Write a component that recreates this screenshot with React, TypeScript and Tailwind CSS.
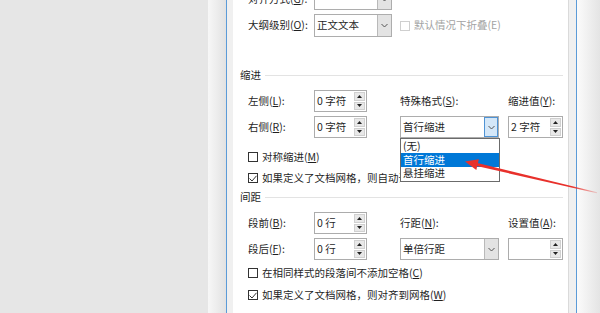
import React from "react";

function Key({ t, k, colon = true }: { t: string; k: string; colon?: boolean }) {
  return (
    <span className="whitespace-nowrap">
      {t}(<span className="underline underline-offset-[1px]">{k}</span>){colon ? ":" : ""}
    </span>
  );
}

function Tri({ up }: { up?: boolean }) {
  return (
    <svg width="5" height="3" viewBox="0 0 5 3">
      <polygon points={up ? "0,3 2.5,0 5,3" : "0,0 2.5,3 5,0"} fill="#222" />
    </svg>
  );
}

function Chevron() {
  return (
    <svg width="7" height="5" viewBox="0 0 7 5">
      <polyline points="0.5,1 3.5,4 6.5,1" fill="none" stroke="#555" strokeWidth="1" />
    </svg>
  );
}

function Spin({ value, w }: { value: string; w: string }) {
  return (
    <div className={`${w} h-[22px] shrink-0 border border-[#acacac] bg-white flex items-center justify-between`}>
      <span className="pl-[2px] whitespace-nowrap">{value}</span>
      <div className="flex flex-col gap-px mr-px h-[18px] w-[11px]">
        <div className="flex-1 bg-[#e8e8e8] border border-[#d0d0d0] flex items-center justify-center">
          <Tri up />
        </div>
        <div className="flex-1 bg-[#e8e8e8] border border-[#d0d0d0] flex items-center justify-center">
          <Tri />
        </div>
      </div>
    </div>
  );
}

function Combo({ value, w, h = "h-[22px]", open }: { value: string; w: string; h?: string; open?: boolean }) {
  return (
    <div className={`${w} ${h} shrink-0 border border-[#adadad] bg-white flex items-stretch`}>
      <span className="flex-1 pl-[2px] flex items-center whitespace-nowrap">{value}</span>
      {open ? (
        <div className="w-[14px] border border-[#4f93d4] bg-[#d4e7f8] flex items-center justify-center">
          <Chevron />
        </div>
      ) : (
        <div className="w-[14px] border-l border-[#b9b9b9] bg-[#e3e3e3] flex items-center justify-center">
          <Chevron />
        </div>
      )}
    </div>
  );
}

function Box({ checked, disabled }: { checked?: boolean; disabled?: boolean }) {
  return (
    <span
      className={`w-[10px] h-[10px] shrink-0 border bg-white flex items-center justify-center ${
        disabled ? "border-[#cfcfcf]" : "border-[#333333]"
      }`}
    >
      {checked && (
        <svg width="8" height="7" viewBox="0 0 8 7">
          <polyline points="0.5,3.5 3,6 7.5,0.8" fill="none" stroke="#333" strokeWidth="1" />
        </svg>
      )}
    </span>
  );
}

function Check({ label, k, checked }: { label: string; k: string; checked?: boolean }) {
  return (
    <div className="h-[16px] pl-[8px] flex items-center gap-[4px] whitespace-nowrap">
      <Box checked={checked} />
      <Key t={label} k={k} colon={false} />
    </div>
  );
}

function Header({ text, mt }: { text: string; mt: string }) {
  return (
    <div className={`${mt} h-[16px] flex items-center`}>
      <span>{text}</span>
      <div className="flex-1 h-px bg-[#e3e3e3] ml-[4px]" />
    </div>
  );
}

export default function App() {
  return (
    <div className="relative w-[600px] h-[313px] overflow-hidden flex bg-[#e6e6e6] font-['Noto_Sans_CJK_SC',sans-serif] text-[10.5px] leading-none text-[#1f1f1f]">
      <div className="w-[208px] shrink-0" />
      <div className="w-[18px] shrink-0 bg-gradient-to-r from-[#f7f7f7] to-[#e2e2e2]" />
      <div className="w-px shrink-0 bg-[#5b9bd8]" />
      <div className="w-[6px] shrink-0 bg-[#f0f0f0]" />

      <div className="w-[335px] shrink-0 bg-white pl-[7px] pr-[5px] flex flex-col">
        <div className="mt-[-12px] h-[22px] pl-[8px] flex items-center">
          <div className="w-[66px]">
            <Key t="对齐方式" k="G" />
          </div>
          <Combo value="" w="w-[78px]" />
        </div>

        <div className="mt-[4px] h-[23px] pl-[8px] flex items-center">
          <div className="w-[66px]">
            <Key t="大纲级别" k="O" />
          </div>
          <Combo value="正文文本" w="w-[78px]" h="h-[23px]" />
          <div className="ml-[8px] flex items-center gap-[4px] text-[#a3a3a3]">
            <Box disabled />
            <span>默认情况下折叠(E)</span>
          </div>
        </div>

        <Header text="缩进" mt="mt-[30px]" />

        <div className="mt-[7px] h-[22px] pl-[8px] flex items-center">
          <div className="w-[66px]">
            <Key t="左侧" k="L" />
          </div>
          <Spin value="0 字符" w="w-[53px]" />
          <div className="ml-[33px] w-[108px]">
            <Key t="特殊格式" k="S" />
          </div>
          <Key t="缩进值" k="Y" />
        </div>

        <div className="mt-[4px] h-[22px] pl-[8px] flex items-center">
          <div className="w-[66px]">
            <Key t="右侧" k="R" />
          </div>
          <Spin value="0 字符" w="w-[53px]" />
          <div className="ml-[33px]">
            <Combo value="首行缩进" w="w-[99px]" open />
          </div>
          <div className="ml-[9px]">
            <Spin value="2 字符" w="w-[55px]" />
          </div>
        </div>

        <div className="mt-[11px]">
          <Check label="对称缩进" k="M" />
        </div>
        {/* the rest of this line sits under the open list */}
        <div className="mt-[5px] w-[160px] overflow-hidden">
          <Check label="如果定义了文档网格，则自动调整右缩进" k="D" checked />
        </div>

        <Header text="间距" mt="mt-[3px]" />

        <div className="mt-[7px] h-[22px] pl-[8px] flex items-center">
          <div className="w-[66px]">
            <Key t="段前" k="B" />
          </div>
          <Spin value="0 行" w="w-[53px]" />
          <div className="ml-[33px] w-[108px]">
            <Key t="行距" k="N" />
          </div>
          <Key t="设置值" k="A" />
        </div>

        <div className="mt-[4px] h-[22px] pl-[8px] flex items-center">
          <div className="w-[66px]">
            <Key t="段后" k="F" />
          </div>
          <Spin value="0 行" w="w-[53px]" />
          <div className="ml-[33px]">
            <Combo value="单倍行距" w="w-[99px]" />
          </div>
          <div className="ml-[9px]">
            <Spin value="" w="w-[55px]" />
          </div>
        </div>

        <div className="mt-[5px]">
          <Check label="在相同样式的段落间不添加空格" k="C" />
        </div>
        <div className="mt-[6px]">
          <Check label="如果定义了文档网格，则对齐到网格" k="W" checked />
        </div>
      </div>

      <div className="w-px shrink-0 bg-[#dadada]" />
      <div className="w-[7px] shrink-0 bg-[#f0f0f0]" />
      <div className="w-px shrink-0 bg-[#5b9bd8]" />
      <div className="flex-1 bg-gradient-to-r from-[#fbfbfb] to-[#e4e4e4]" />

      {/* open dropdown list */}
      <div className="absolute left-[400px] top-[138px] w-[100px] h-[44px] border border-[#6b6b6b] bg-white flex flex-col py-px">
        <div className="h-[14px] pl-[2px] flex items-center">(无)</div>
        <div className="h-[14px] pl-[2px] flex items-center bg-[#0078d7] text-white">首行缩进</div>
        <div className="h-[14px] pl-[2px] flex items-center">悬挂缩进</div>
      </div>

      {/* red annotation arrow */}
      <svg className="absolute left-0 top-0 pointer-events-none" width="600" height="313" viewBox="0 0 600 313">
        <defs>
          <linearGradient id="fade" x1="470" y1="163" x2="598" y2="193" gradientUnits="userSpaceOnUse">
            <stop offset="0" stopColor="#e8302b" />
            <stop offset="0.8" stopColor="#e8302b" />
            <stop offset="1" stopColor="#e8302b" stopOpacity="0.15" />
          </linearGradient>
        </defs>
        <polygon points="476.6,166.1 477.4,162.9 597.1,192.2 596.9,193.2" fill="url(#fade)" />
        <polygon points="465,161.5 478.9,159.3 476.3,169.9" fill="#e8302b" />
      </svg>
    </div>
  );
}
